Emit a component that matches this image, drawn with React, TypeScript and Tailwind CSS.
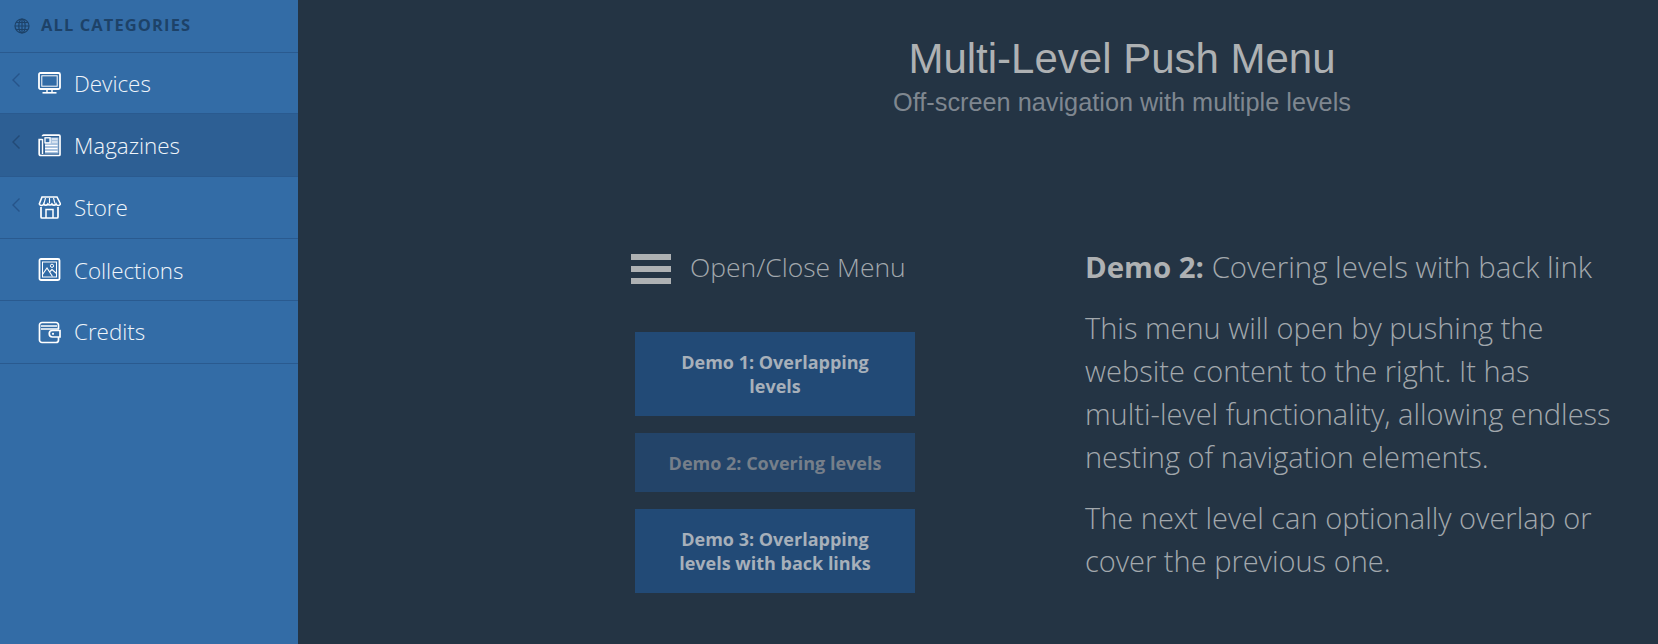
import React from "react";

const ui = "font-['Open_Sans','Noto_Sans',sans-serif]";

const Chevron = ({ stroke }: { stroke: string }) => (
  <svg width="10" height="16" viewBox="0 0 10 16" fill="none" stroke={stroke} strokeWidth="1.4">
    <path d="M8.5 1.5 L2 8 L8.5 14.5" />
  </svg>
);

const Globe = () => (
  <svg width="16" height="16" viewBox="0 0 16 16" fill="none" stroke="#1d4268" strokeWidth="1.2">
    <circle cx="8" cy="8" r="7" />
    <ellipse cx="8" cy="8" rx="3.2" ry="7" />
    <path d="M8 1v14M1 8h14M2 4.5h12M2 11.5h12" />
  </svg>
);

const icons: Record<string, React.ReactNode> = {
  devices: (
    <>
      <rect x="1" y="1" width="21" height="16" rx="1.5" strokeWidth="1.8" />
      <rect x="3.8" y="3.8" width="15.4" height="10.4" strokeWidth="1" />
      <path d="M9 18v2M14 18v2" strokeWidth="1.4" />
      <path d="M4.5 20.8h14" strokeWidth="1.6" />
    </>
  ),
  magazines: (
    <>
      <rect x="7" y="3.5" width="13.5" height="16" fill="#a9c3df" stroke="none" />
      <path d="M4.5 2.2a1 1 0 0 1 1-1h15.5a1 1 0 0 1 1 1V20.5a1 1 0 0 1-1 1H3a1.8 1.8 0 0 1-1.8-1.8V5.5H4.5" strokeWidth="1.7" />
      <path d="M4.5 5v15" strokeWidth="1.4" />
      <rect x="7" y="3.8" width="5" height="5" fill="#336ca6" strokeWidth="1.3" />
      <path d="M14 5h5.5M14 8h5.5M7 11.5h12.5M7 14.5h12.5M7 17.5h12.5" strokeWidth="1.1" />
    </>
  ),
  store: (
    <>
      <path d="M4 1h15l3.5 7a2.4 2.4 0 0 1-4.4 0 2.4 2.4 0 0 1-4.2 0 2.4 2.4 0 0 1-4 0 2.4 2.4 0 0 1-4.2 0 2.4 2.4 0 0 1-4.4 0z" strokeWidth="1.6" />
      <path d="M7.5 2l-1.5 5.5M11.5 2v5.5M15.5 2l1.5 5.5" strokeWidth="1.1" />
      <path d="M3 11v10a1 1 0 0 0 1 1h15a1 1 0 0 0 1-1V11" strokeWidth="1.7" />
      <path d="M8 22V13.5h7V22" strokeWidth="1.5" />
    </>
  ),
  collections: (
    <>
      <rect x="1.5" y="1" width="20" height="21" rx="1.5" strokeWidth="1.8" />
      <rect x="4.5" y="4" width="14" height="15" strokeWidth="1" />
      <path d="M4.5 16.5l4.5-6.5 5.5 8.5M12 13.5l2-2 4.5 4" strokeWidth="1.1" />
      <circle cx="14" cy="7.8" r="1.6" strokeWidth="1" />
    </>
  ),
  credits: (
    <>
      <path d="M20.5 8V4A2.5 2.5 0 0 0 18 1.5H4A2.5 2.5 0 0 0 1.5 4v15A2.5 2.5 0 0 0 4 21.5h14a2.5 2.5 0 0 0 2.5-2.5v-3" strokeWidth="1.7" />
      <path d="M3 5h16M3 8h18" strokeWidth="1.3" />
      <path d="M14.5 9.5h7.5v6.5h-7.5a3.25 3.25 0 0 1 0-6.5z" strokeWidth="1.7" />
      <circle cx="15" cy="12.8" r="1.1" fill="white" stroke="none" />
    </>
  ),
};

const menu = [
  { id: "devices", label: "Devices", more: true, h: "h-[61px]", text: "pt-[2px]" },
  { id: "magazines", label: "Magazines", more: true, h: "h-[63px]", text: "pt-[2px]", active: true },
  { id: "store", label: "Store", more: true, h: "h-[62px]", text: "" },
  { id: "collections", label: "Collections", more: false, h: "h-[62px]", text: "pt-[2px]" },
  { id: "credits", label: "Credits", more: false, h: "h-[63px]", text: "" },
];

const demos = [
  { text: "Demo 1: Overlapping levels", h: "h-[84px]", current: false },
  { text: "Demo 2: Covering levels", h: "h-[59px]", current: true },
  { text: "Demo 3: Overlapping levels with back links", h: "h-[84px]", current: false },
];

export default function App() {
  return (
    <div className={`flex h-[644px] w-[1658px] overflow-hidden bg-[#243444] ${ui}`}>
      <aside className="h-full w-[298px] shrink-0 bg-[#336ca6]">
        <div className="flex h-[53px] items-center gap-[11px] border-b border-[#2a5a8f] pl-[14px] pb-[1px]">
          <Globe />
          <span className="text-[16.5px] font-bold tracking-[1.1px] text-[#1d4268]">ALL CATEGORIES</span>
        </div>
        {menu.map((item) => (
          <div
            key={item.id}
            className={`flex items-center border-b border-[#2a5a8f] ${item.h} ${item.active ? "bg-[#2d5f94]" : ""}`}
          >
            <div className="mb-[6px] w-[38px] pl-[11px]">
              {item.more && <Chevron stroke={item.active ? "#234a76" : "#27548a"} />}
            </div>
            <svg width="23" height="23" viewBox="0 0 23 23" fill="none" stroke="white" strokeWidth="1.5">
              {icons[item.id]}
            </svg>
            <span className={`ml-[13px] text-[22.4px] font-light text-[#f0f5fa] ${item.text}`}>{item.label}</span>
          </div>
        ))}
      </aside>

      <main className="min-w-0 flex-1 pl-[288px]">
        <header className="pt-[35px] text-center font-['Liberation_Sans',Arial,sans-serif]">
          <h1 className="text-[42px] leading-[48px] text-[#aeb1b3]">Multi-Level Push Menu</h1>
          <p className="mt-[4px] text-[25.3px] leading-[30px] text-[#7f8790]">Off-screen navigation with multiple levels</p>
        </header>

        <div className="flex pt-[129px]">
          <div className="w-[329px] shrink-0 pt-[4px] pl-[45px]">
            <div className="flex h-[38px] items-center gap-[19px]">
              <div className="flex h-[30px] w-[40px] flex-col justify-between">
                <div className="h-[6px] bg-[#aeb1b3]" />
                <div className="h-[6px] bg-[#aeb1b3]" />
                <div className="h-[6px] bg-[#aeb1b3]" />
              </div>
              <span className="pb-[2px] text-[26.5px] font-light text-[#a2a8ad]">Open/Close Menu</span>
            </div>
            <div className="mt-[44px] ml-[4px] flex w-[280px] flex-col gap-[17px]">
              {demos.map((d) => (
                <div
                  key={d.text}
                  className={`flex items-center justify-center px-[30px] text-center text-[18px] leading-[24px] font-bold ${d.h} ${
                    d.current ? "bg-[#234469] text-[#767f8a]" : "bg-[#224a76] text-[#a7b0ba]"
                  }`}
                >
                  {d.text}
                </div>
              ))}
            </div>
          </div>

          <div className="ml-[170px] w-[530px] text-[29px] leading-[43px] font-light text-[#a2a8ad]">
            <p className="text-[29.4px]">
              <strong className="font-bold text-[#aeb1b3]">Demo 2:</strong> Covering levels with back link
            </p>
            <p className="mt-[17px]">
              This menu will open by pushing the website content to the right. It has
              <br />
              multi-level functionality, allowing endless nesting of navigation elements.
            </p>
            <p className="mt-[18px]">The next level can optionally overlap or cover the previous one.</p>
          </div>
        </div>
      </main>
    </div>
  );
}
